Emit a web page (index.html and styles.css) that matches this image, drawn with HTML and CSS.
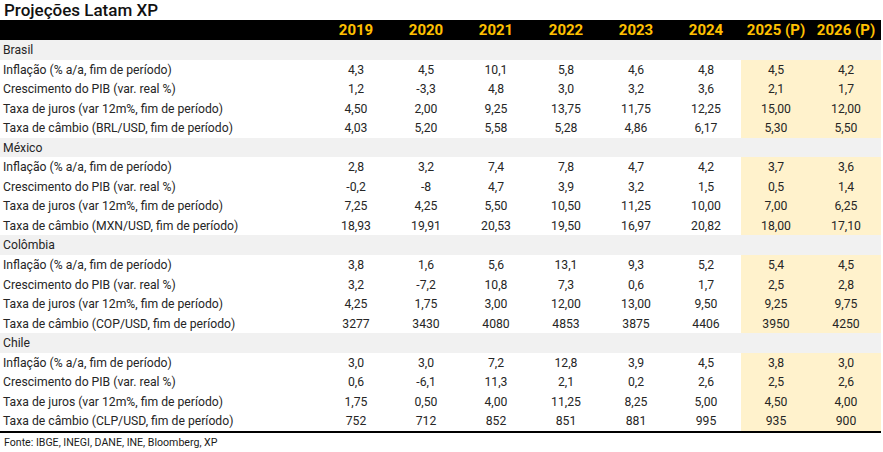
FILE: index.html
```html
<!DOCTYPE html>
<html lang="pt-BR">
<head>
<meta charset="utf-8">
<title>Projeções Latam XP</title>
<link rel="stylesheet" href="styles.css">
</head>
<body>
<div class="page">
  <h1 class="title">Projeções Latam XP</h1>
  <table class="proj">
    <colgroup>
      <col class="c-label">
      <col class="c-year"><col class="c-year"><col class="c-year"><col class="c-year"><col class="c-year"><col class="c-year"><col class="c-year"><col class="c-year">
    </colgroup>
    <thead>
      <tr class="head">
        <th></th><th>2019</th><th>2020</th><th>2021</th><th>2022</th><th>2023</th><th>2024</th><th>2025 (P)</th><th>2026 (P)</th>
      </tr>
    </thead>
    <tbody>
      <tr class="sec"><td colspan="9">Brasil</td></tr>
      <tr><td>Inflação (% a/a, fim de período)</td><td>4,3</td><td>4,5</td><td>10,1</td><td>5,8</td><td>4,6</td><td>4,8</td><td class="p">4,5</td><td class="p">4,2</td></tr>
      <tr><td>Crescimento do PIB (var. real %)</td><td>1,2</td><td>-3,3</td><td>4,8</td><td>3,0</td><td>3,2</td><td>3,6</td><td class="p">2,1</td><td class="p">1,7</td></tr>
      <tr><td>Taxa de juros (var 12m%, fim de período)</td><td>4,50</td><td>2,00</td><td>9,25</td><td>13,75</td><td>11,75</td><td>12,25</td><td class="p">15,00</td><td class="p">12,00</td></tr>
      <tr><td>Taxa de câmbio (BRL/USD, fim de período)</td><td>4,03</td><td>5,20</td><td>5,58</td><td>5,28</td><td>4,86</td><td>6,17</td><td class="p">5,30</td><td class="p">5,50</td></tr>
      <tr class="sec"><td colspan="9">México</td></tr>
      <tr><td>Inflação (% a/a, fim de período)</td><td>2,8</td><td>3,2</td><td>7,4</td><td>7,8</td><td>4,7</td><td>4,2</td><td class="p">3,7</td><td class="p">3,6</td></tr>
      <tr><td>Crescimento do PIB (var. real %)</td><td>-0,2</td><td>-8</td><td>4,7</td><td>3,9</td><td>3,2</td><td>1,5</td><td class="p">0,5</td><td class="p">1,4</td></tr>
      <tr><td>Taxa de juros (var 12m%, fim de período)</td><td>7,25</td><td>4,25</td><td>5,50</td><td>10,50</td><td>11,25</td><td>10,00</td><td class="p">7,00</td><td class="p">6,25</td></tr>
      <tr><td>Taxa de câmbio (MXN/USD, fim de período)</td><td>18,93</td><td>19,91</td><td>20,53</td><td>19,50</td><td>16,97</td><td>20,82</td><td class="p">18,00</td><td class="p">17,10</td></tr>
      <tr class="sec"><td colspan="9">Colômbia</td></tr>
      <tr><td>Inflação (% a/a, fim de período)</td><td>3,8</td><td>1,6</td><td>5,6</td><td>13,1</td><td>9,3</td><td>5,2</td><td class="p">5,4</td><td class="p">4,5</td></tr>
      <tr><td>Crescimento do PIB (var. real %)</td><td>3,2</td><td>-7,2</td><td>10,8</td><td>7,3</td><td>0,6</td><td>1,7</td><td class="p">2,5</td><td class="p">2,8</td></tr>
      <tr><td>Taxa de juros (var 12m%, fim de período)</td><td>4,25</td><td>1,75</td><td>3,00</td><td>12,00</td><td>13,00</td><td>9,50</td><td class="p">9,25</td><td class="p">9,75</td></tr>
      <tr><td>Taxa de câmbio (COP/USD, fim de período)</td><td>3277</td><td>3430</td><td>4080</td><td>4853</td><td>3875</td><td>4406</td><td class="p">3950</td><td class="p">4250</td></tr>
      <tr class="sec"><td colspan="9">Chile</td></tr>
      <tr><td>Inflação (% a/a, fim de período)</td><td>3,0</td><td>3,0</td><td>7,2</td><td>12,8</td><td>3,9</td><td>4,5</td><td class="p">3,8</td><td class="p">3,0</td></tr>
      <tr><td>Crescimento do PIB (var. real %)</td><td>0,6</td><td>-6,1</td><td>11,3</td><td>2,1</td><td>0,2</td><td>2,6</td><td class="p">2,5</td><td class="p">2,6</td></tr>
      <tr><td>Taxa de juros (var 12m%, fim de período)</td><td>1,75</td><td>0,50</td><td>4,00</td><td>11,25</td><td>8,25</td><td>5,00</td><td class="p">4,50</td><td class="p">4,00</td></tr>
      <tr class="last"><td>Taxa de câmbio (CLP/USD, fim de período)</td><td>752</td><td>712</td><td>852</td><td>851</td><td>881</td><td>995</td><td class="p">935</td><td class="p">900</td></tr>
    </tbody>
  </table>
  <p class="source">Fonte: IBGE, INEGI, DANE, INE, Bloomberg, XP</p>
</div>
</body>
</html>
```

FILE: styles.css
```css
html, body {
  margin: 0;
  padding: 0;
  background: #ffffff;
}

.page {
  width: 881px;
  font-family: Roboto, "Liberation Sans", sans-serif;
  color: #1a1a1a;
}

.title {
  margin: 0;
  height: 20px;
  padding-left: 4px;
  font-size: 17px;
  font-weight: 500;
  line-height: 20px;
  color: #111;
}

.proj {
  width: 881px;
  border-collapse: collapse;
  table-layout: fixed;
  font-size: 12.2px;
  font-weight: 400;
}

.c-label { width: 321px; }
.c-year { width: 70px; }

.proj th,
.proj td {
  padding: 0;
  white-space: nowrap;
}

.head {
  height: 20px;
  background: #000;
}

.head th {
  color: #ffc000;
  font-size: 15px;
  font-weight: 700;
  text-align: center;
  line-height: 20px;
}

.proj tbody tr {
  height: 19.55px;
}

.proj tbody td {
  text-align: center;
  line-height: 18.55px;
  padding-top: 1px;
  color: #262626;
}

.proj tbody td:first-child {
  text-align: left;
  padding-left: 3px;
}

.sec td {
  background: #f1f1f1;
}

.p {
  background: #fff2cc;
}

.last td {
  border-bottom: 2px solid #000;
}

.source {
  margin: 0;
  padding: 2px 0 0 4px;
  font-size: 10.6px;
  font-weight: 400;
  line-height: 16px;
  color: #1a1a1a;
}
```
